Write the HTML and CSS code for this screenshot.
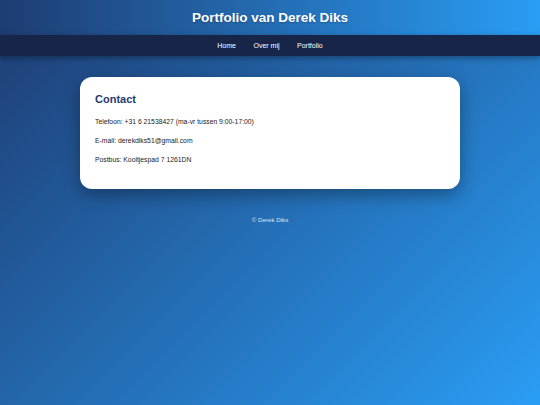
FILE: index.html
```html
<!DOCTYPE html>
<html lang="nl">
<head>
<meta charset="utf-8">
<title>Contact - Derek Diks</title>
<link rel="stylesheet" href="styles.css">
</head>
<body>
<header class="site-header">
  <h1 class="site-title">Portfolio van Derek Diks</h1>
</header>
<nav class="site-nav">
  <a href="#" class="nav-link">Home</a>
  <a href="#" class="nav-link">Over mij</a>
  <a href="#" class="nav-link">Portfolio</a>
</nav>
<main class="content">
  <section class="card">
    <h2 class="card-title">Contact</h2>
    <p class="card-line">Telefoon: +31 6 21538427 (ma-vr tussen 9:00-17:00)</p>
    <p class="card-line">E-mail: derekdiks51@gmail.com</p>
    <p class="card-line">Postbus: Kooltjespad 7 1261DN</p>
  </section>
</main>
<footer class="site-footer">© Derek Diks</footer>
</body>
</html>
```
FILE: styles.css
```css
html, body {
  margin: 0;
  padding: 0;
}
body {
  min-height: 100vh;
  font-family: "Liberation Sans", Arial, sans-serif;
  background: linear-gradient(135deg, #1e3c72 0%, #2a9df4 100%);
  color: #222;
}
.site-header {
  height: 35px;
  display: flex;
  align-items: center;
  justify-content: center;
  background: linear-gradient(90deg, #1e3c72 0%, #2a9df4 100%);
}
.site-title {
  margin: 0;
  font-size: 13.5px;
  font-weight: bold;
  color: #ffffff;
  line-height: 16px;
  text-shadow: 0 1px 2px rgba(0,0,0,0.25);
}
.site-nav {
  height: 21px;
  display: flex;
  align-items: center;
  justify-content: center;
  gap: 17.5px;
  background: #172549;
  box-shadow: 0 2px 6px rgba(0,0,0,0.35);
  position: relative;
}
.nav-link {
  color: #ffffff;
  text-decoration: none;
  font-size: 7px;
  line-height: 8px;
}
.content {
  padding-top: 21px;
}
.card {
  width: 380px;
  box-sizing: border-box;
  margin: 0 auto;
  background: #ffffff;
  border-radius: 12px;
  padding: 16px 15px 14px;
  box-shadow: 0 6px 18px rgba(0, 0, 0, 0.35);
}
.card-title {
  margin: 0 0 12px;
  font-size: 11px;
  line-height: 13px;
  font-weight: bold;
  color: #1e3c72;
}
.card-line {
  margin: 0 0 11px;
  font-size: 6.8px;
  line-height: 8px;
  color: #222;
}
.site-footer {
  margin-top: 27px;
  text-align: center;
  font-size: 6.2px;
  line-height: 8px;
  color: rgba(255,255,255,0.85);
}
```
